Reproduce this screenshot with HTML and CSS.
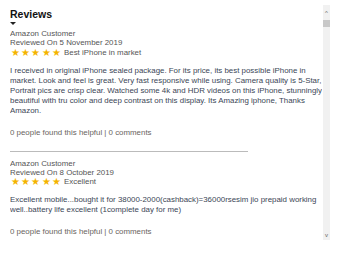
FILE: index.html
```html
<html><head>
<meta charset="utf-8"><link rel="stylesheet" href="styles.css">
</head><body><div class="review_wrap">
	<div class="review_box">
		<div class="headline">Reviews</div>
		<div class="caret"></div>

		<div class="review">
			<div class="author">Amazon Customer</div>
			<div class="postTime">Reviewed On 5 November 2019</div>
			<div class="rating"><span class="stars">★★★★★</span><span class="title">Best iPhone in market</span></div>
			<p class="content">I received in original iPhone sealed package. For its price, its best possible iPhone in market. Look and feel is great. Very fast responsive while using. Camera quality is 5-Star, Portrait pics are crisp clear. Watched some 4k and HDR videos on this iPhone, stunningly beautiful with tru color and deep contrast on this display. Its Amazing iphone, Thanks Amazon.</p>
			<p class="helpful">0 people found this helpful | 0 comments</p>
		</div>
		<div class="line"></div>

		<div class="review">
			<div class="author">Amazon Customer</div>
			<div class="postTime">Reviewed On 8 October 2019</div>
			<div class="rating"><span class="stars">★★★★★</span><span class="title">Excellent</span></div>
			<p class="content">Excellent mobile...bought it for 38000-2000(cashback)=36000rsesim jio prepaid working well..battery life excellent (1complete day for me)</p>
			<p class="helpful">0 people found this helpful | 0 comments</p>
		</div>
	</div>
	<div class="scrollbar">
		<span class="arrow">&#94;</span>
		<span class="thumb"></span>
		<span class="track"></span>
		<span class="arrow down">v</span>
	</div>
</div></body></html>
```
FILE: styles.css
```css
body{margin: 0px;background: #fff;font-family: "Liberation Sans", Arial, sans-serif;}
p{margin: 0px;}
.review_wrap {display: flex;height: 235px;margin-top: 5px;padding-left: 10px;}
.review_box {width: 312px;overflow: hidden;padding-top: 3px;}
.review_box .headline {font-size: 10.5px;font-weight: bold;line-height: 12px;color: #111;}
.review_box .caret {width: 0;height: 0;margin: 2px 0 0 0;border-left: 3px solid transparent;border-right: 3px solid transparent;border-top: 3px solid #222;}
.review {padding-top: 4px;font-size: 7.9px;}
.review .author, .review .postTime {color: #555;line-height: 9.3px;}
.review .rating {display: flex;align-items: center;height: 10px;line-height: 10px;color: #555;}
.review .stars {color: #f4b400;font-size: 9.5px;letter-spacing: 1.2px;margin: 0 2px 0 1px;}
.review .content {color: #3b4656;line-height: 10px;margin-top: 8px;}
.review .helpful {color: #6a6460;line-height: 10px;margin-top: 12px;}
.line {width: 238px;border-top: 1px solid #bbb;margin: 13px 0 3px 0;}
.scrollbar {display: flex;flex-direction: column;align-items: center;width: 7px;background: #f1f1f1;margin-left: 1px;}
.scrollbar .arrow {font-size: 6px;line-height: 10px;color: #666;height: 12px;padding-top: 3px;}
.scrollbar .thumb {width: 7px;height: 7px;background: #c8c8c8;}
.scrollbar .track {flex: 1;}
.scrollbar .down {padding-top: 0;height: 10px;}
```
